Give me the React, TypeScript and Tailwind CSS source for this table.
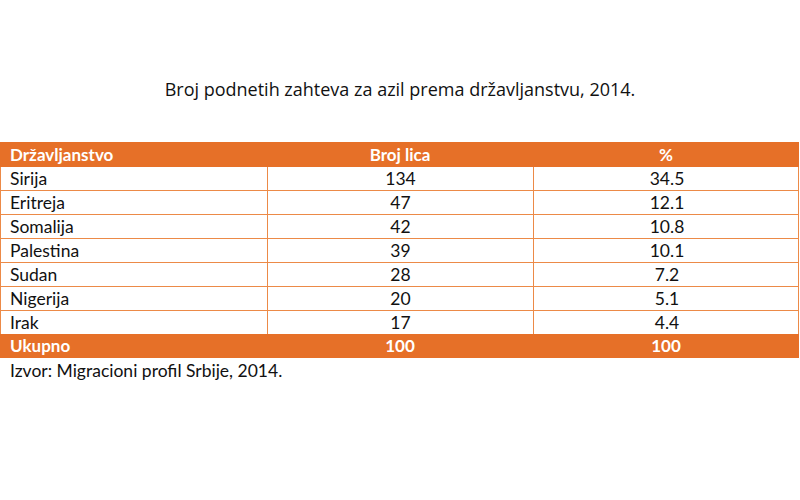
import React from "react";

const rows: [string, string, string][] = [
  ["Sirija", "134", "34.5"],
  ["Eritreja", "47", "12.1"],
  ["Somalija", "42", "10.8"],
  ["Palestina", "39", "10.1"],
  ["Sudan", "28", "7.2"],
  ["Nigerija", "20", "5.1"],
  ["Irak", "17", "4.4"],
];

export default function App() {
  return (
    <div className="w-[800px] h-[500px] bg-white text-black overflow-hidden">
      <div className="h-[78px]" />
      <div
        className="h-[22px] text-center text-[18px] leading-[22px] text-[#111]"
        style={{ fontFamily: "'Open Sans', 'Liberation Sans', sans-serif" }}
      >
        Broj podnetih zahteva za azil prema državljanstvu, 2014.
      </div>
      <div className="h-[42px]" />
      <div style={{ fontFamily: "Lato, 'Liberation Sans', sans-serif" }} className="w-[799px]">
        <div className="grid grid-cols-[267px_266px_266px] h-[25px] bg-[#e67028] text-white font-bold text-[17px] leading-[24px] items-center">
          <div className="pl-[10px]">Državljanstvo</div>
          <div className="text-center">Broj lica</div>
          <div className="text-center">%</div>
        </div>
        {rows.map(([c, n, p]) => (
          <div
            key={c}
            className="grid grid-cols-[267px_266px_266px] h-[24px] text-[17.5px] leading-[23px] text-[#111] border-l border-r border-b border-[#ec8a47]"
          >
            <div className="pl-[9px] border-r border-[#ec8a47]">{c}</div>
            <div className="text-center border-r border-[#ec8a47]">{n}</div>
            <div className="text-center">{p}</div>
          </div>
        ))}
        <div className="grid grid-cols-[267px_266px_266px] h-[24px] bg-[#e67028] text-white font-bold text-[17px] leading-[24px] items-center -mt-px">
          <div className="pl-[10px]">Ukupno</div>
          <div className="text-center">100</div>
          <div className="text-center">100</div>
        </div>
        <div className="pl-[10px] pt-[2px] text-[17.5px] leading-[22px] text-[#111]">
          Izvor: Migracioni profil Srbije, 2014.
        </div>
      </div>
    </div>
  );
}
